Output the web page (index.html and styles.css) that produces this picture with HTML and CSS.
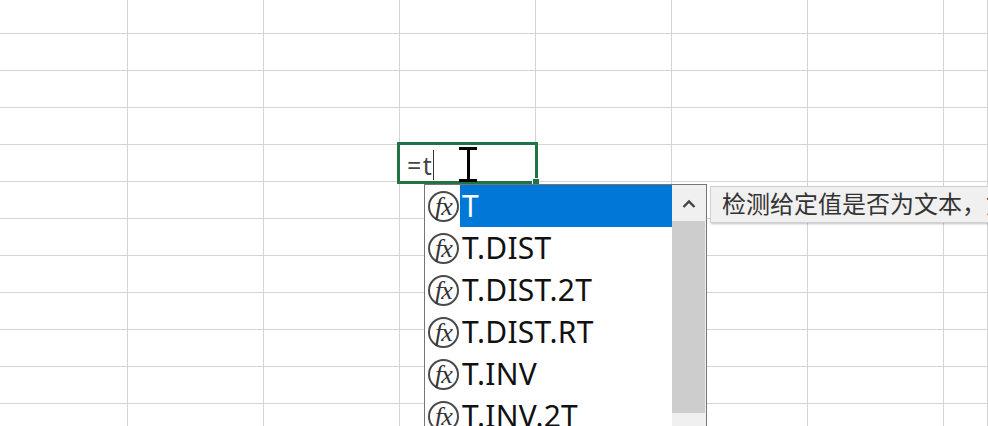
FILE: index.html
```html
<!DOCTYPE html>
<html lang="zh-CN">
<head>
<meta charset="utf-8">
<title>Excel formula autocomplete</title>
<link rel="stylesheet" href="styles.css">
</head>
<body>
<div class="sheet">
  <div class="grid">
    <div></div><div></div><div></div><div></div><div></div><div></div><div></div><div></div>
    <div></div><div></div><div></div><div></div><div></div><div></div><div></div><div></div>
    <div></div><div></div><div></div><div></div><div></div><div></div><div></div><div></div>
    <div></div><div></div><div></div><div></div><div></div><div></div><div></div><div></div>
    <div></div><div></div><div></div><div></div><div></div><div></div><div></div><div></div>
    <div></div><div></div><div></div><div></div><div></div><div></div><div></div><div></div>
    <div></div><div></div><div></div><div></div><div></div><div></div><div></div><div></div>
    <div></div><div></div><div></div><div></div><div></div><div></div><div></div><div></div>
    <div></div><div></div><div></div><div></div><div></div><div></div><div></div><div></div>
    <div></div><div></div><div></div><div></div><div></div><div></div><div></div><div></div>
    <div></div><div></div><div></div><div></div><div></div><div></div><div></div><div></div>
    <div></div><div></div><div></div><div></div><div></div><div></div><div></div><div></div>
  </div>

  <div class="active-cell">
    <span class="formula">=t</span><span class="caret"></span>
    <span class="fill-handle"></span>
  </div>

  <div class="popup">
    <ul class="fn-list">
      <li class="fn-row is-selected"><span class="fx"><span class="fx-glyph">fx</span></span><span class="fn-name">T</span></li>
      <li class="fn-row"><span class="fx"><span class="fx-glyph">fx</span></span><span class="fn-name">T.DIST</span></li>
      <li class="fn-row"><span class="fx"><span class="fx-glyph">fx</span></span><span class="fn-name">T.DIST.2T</span></li>
      <li class="fn-row"><span class="fx"><span class="fx-glyph">fx</span></span><span class="fn-name">T.DIST.RT</span></li>
      <li class="fn-row"><span class="fx"><span class="fx-glyph">fx</span></span><span class="fn-name">T.INV</span></li>
      <li class="fn-row"><span class="fx"><span class="fx-glyph">fx</span></span><span class="fn-name">T.INV.2T</span></li>
    </ul>
    <div class="scrollbar">
      <div class="scroll-up">
        <svg class="chevron" width="14" height="9" viewBox="0 0 14 9"><path d="M1.5 8 L7 2.5 L12.5 8" fill="none" stroke="#444" stroke-width="2.4"/></svg>
      </div>
      <div class="scroll-thumb"></div>
    </div>
  </div>

  <div class="tip">检测给定值是否为文本，如果是文本按原样返回，如果不是文本则返回双引号(空文本)</div>

  <svg class="ibeam" width="20" height="35" viewBox="0 0 20 35">
    <path d="M1 1.5 H19 M10.5 2 V33 M1 33.5 H19" fill="none" stroke="#000" stroke-width="3"/>
  </svg>
</div>
</body>
</html>
```

FILE: styles.css
```css
* { box-sizing: border-box; }

html, body {
  margin: 0;
  padding: 0;
  width: 988px;
  height: 426px;
  overflow: hidden;
  background: #fff;
}

.sheet {
  position: relative;
  width: 988px;
  height: 426px;
  overflow: hidden;
  font-family: "Noto Sans", "Noto Sans CJK SC", sans-serif;
}

.grid {
  display: grid;
  grid-template-columns: 128px repeat(6, 136px) 44px;
  grid-template-rows: 34px repeat(11, 37px);
}

.grid > div {
  border-right: 1px solid #d4d4d4;
  border-bottom: 1px solid #d4d4d4;
}

.active-cell {
  position: absolute;
  left: 397px;
  top: 142px;
  width: 141px;
  height: 42px;
  border: 3px solid #217346;
  background: #fff;
  display: flex;
  align-items: center;
  padding: 4px 0 0 7px;
}

.formula {
  font-size: 25px;
  line-height: 30px;
  color: #444;
  letter-spacing: 1.5px;
}

.caret {
  width: 1px;
  height: 30px;
  background: #333;
}

.fill-handle {
  position: absolute;
  right: -4px;
  bottom: -4px;
  width: 7px;
  height: 7px;
  background: #217346;
  border-left: 1px solid #fff;
  border-top: 1px solid #fff;
}

.popup {
  position: absolute;
  left: 424px;
  top: 184px;
  width: 283px;
  height: 250px;
  background: #fff;
  border: 1px solid #767676;
  display: flex;
}

.fn-list {
  list-style: none;
  margin: 0;
  padding: 0;
  width: 247px;
}

.fn-row {
  display: flex;
  align-items: center;
  height: 42px;
}

.fx {
  flex: none;
  width: 31px;
  height: 31px;
  margin: 0 1px 0 3px;
  border: 2px solid #4a4a4a;
  border-radius: 50%;
  display: flex;
  align-items: center;
  justify-content: center;
}

.fx-glyph {
  font-family: "Liberation Serif", serif;
  font-style: italic;
  font-size: 26px;
  line-height: 27px;
  color: #333;
  letter-spacing: -1px;
}

.fn-name {
  flex: 1;
  align-self: stretch;
  padding-left: 2px;
  font-size: 30px;
  letter-spacing: 0.2px;
  line-height: 41px;
  color: #111;
}

.is-selected .fn-name {
  background: #0078d7;
  color: #fff;
}

.scrollbar {
  flex: none;
  width: 34px;
  background: #f0f0f0;
  display: flex;
  flex-direction: column;
}

.scroll-up {
  height: 36px;
  display: flex;
  align-items: center;
  justify-content: center;
}

.scroll-thumb {
  height: 192px;
  margin: 0 1px 0 0;
  background: #cdcdcd;
}

.tip {
  position: absolute;
  left: 710px;
  top: 186px;
  width: 420px;
  height: 37px;
  padding-left: 11px;
  background: #f0f0f0;
  border: 1px solid #d0d0d0;
  box-shadow: 1px 1px 2px rgba(0, 0, 0, 0.25);
  font-family: "Noto Sans CJK SC", sans-serif;
  font-size: 24px;
  line-height: 32px;
  color: #333;
  white-space: nowrap;
  overflow: hidden;
}

.ibeam {
  position: absolute;
  left: 458px;
  top: 147px;
}
```
